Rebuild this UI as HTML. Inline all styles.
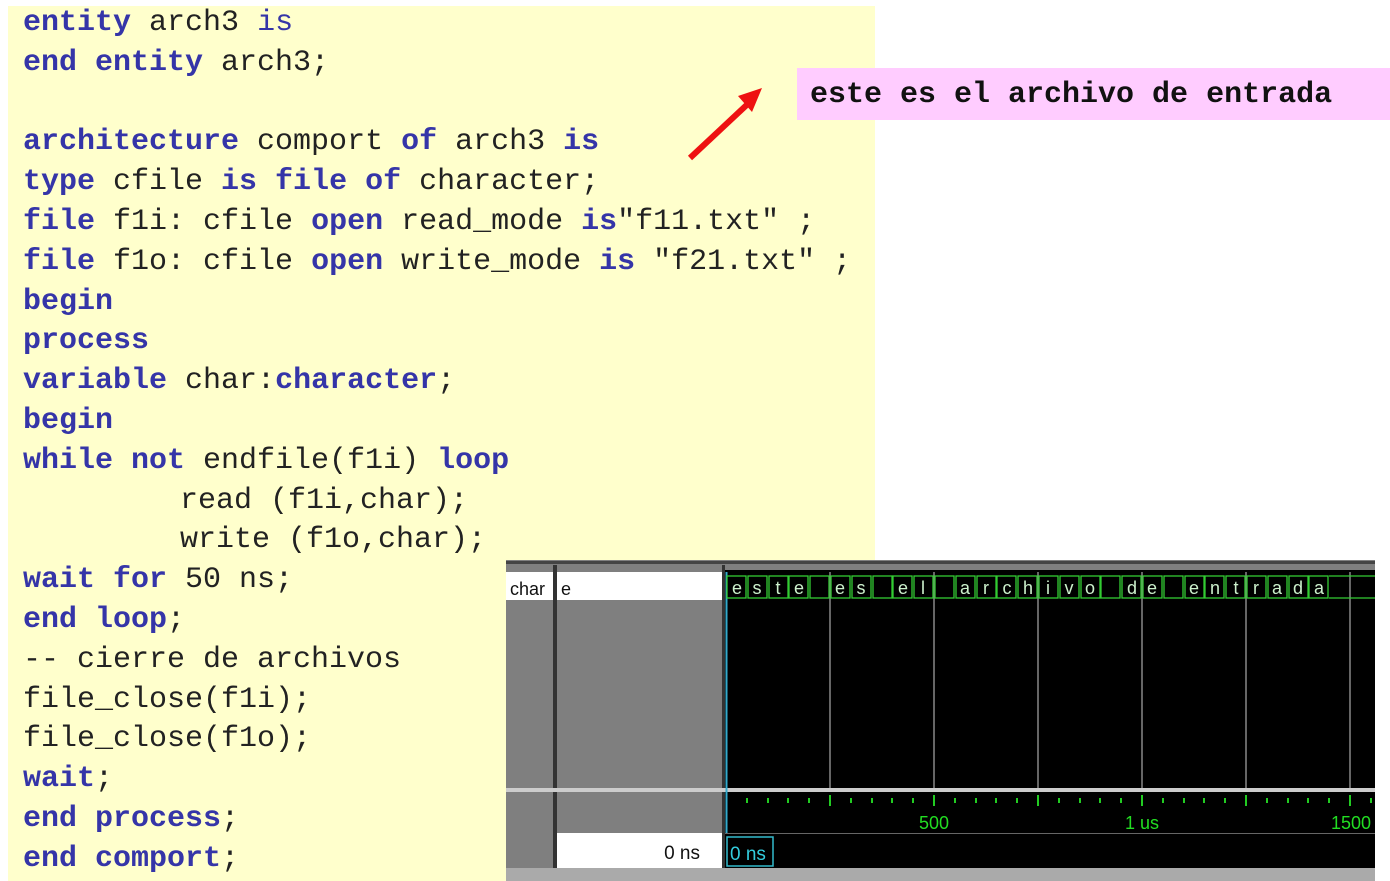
<!DOCTYPE html>
<html><head><meta charset="utf-8"><style>
body{margin:0;width:1390px;height:881px;background:#fff;position:relative;overflow:hidden}
#y{position:absolute;left:8px;top:6px;width:867px;height:875px;background:#ffffcc}
#code{position:absolute;left:23px;top:4px;margin:0;font-family:"Liberation Mono",monospace;font-size:30px;line-height:39.8px;color:#222;white-space:pre}
b{color:#3535a8}
.in{display:inline-block;width:157px}
#pink{position:absolute;left:797px;top:68px;width:593px;height:52px;background:#ffccff;font-family:"Liberation Mono",monospace;font-weight:bold;font-size:30px;line-height:54px;color:#111;padding-left:13px;box-sizing:border-box;white-space:pre}
svg{position:absolute;left:0;top:0}
</style></head><body>
<div id="y"></div>
<pre id="code"><b>entity</b> arch3 <b style="font-weight:normal">is</b>
<b>end entity</b> arch3;

<b>architecture</b> comport <b>of</b> arch3 <b>is</b>
<b>type</b> cfile <b>is file of</b> character;
<b>file</b> f1i: cfile <b>open</b> read_mode <b>is</b>"f11.txt" ;
<b>file</b> f1o: cfile <b>open</b> write_mode <b>is</b> "f21.txt" ;
<b>begin</b>
<b>process</b>
<b>variable</b> char:<b>character</b>;
<b>begin</b>
<b>while not</b> endfile(f1i) <b>loop</b>
<span class="in"></span>read (f1i,char);
<span class="in"></span>write (f1o,char);
<b>wait for</b> 50 ns;
<b>end loop</b>;
-- cierre de archivos
file_close(f1i);
file_close(f1o);
<b>wait</b>;
<b>end process</b>;
<b>end comport</b>;</pre>
<div id="pink">este es el archivo de entrada</div>
<svg width="1390" height="881">
<line x1="690" y1="158" x2="752" y2="100" stroke="#ee1111" stroke-width="6"/>
<polygon points="762,88 738,96 752,112" fill="#ee1111"/>
<rect x="506" y="560" width="869" height="320" fill="#7f7f7f"/>
<rect x="506" y="561" width="869" height="3" fill="#444"/>
<rect x="506" y="572" width="47" height="28" fill="#fff"/>
<rect x="557" y="572" width="165" height="28" fill="#fff"/>
<rect x="553" y="565" width="4" height="316" fill="#333"/>
<rect x="722" y="565" width="3" height="316" fill="#333"/>
<rect x="725" y="570" width="650" height="298" fill="#000"/>
<rect x="506" y="788" width="869" height="4" fill="#ccc"/>
<rect x="557" y="833" width="165" height="35" fill="#fff"/>
<rect x="506" y="868" width="869" height="13" fill="#aaa"/>
<rect x="725" y="833" width="650" height="1" fill="#666"/>
<line x1="726.5" y1="572" x2="726.5" y2="833" stroke="#33aacc" stroke-width="2"/>
<g stroke="#888" stroke-width="1.5">
<line x1="830" y1="572" x2="830" y2="788"/><line x1="934" y1="572" x2="934" y2="788"/><line x1="1038" y1="572" x2="1038" y2="788"/><line x1="1142" y1="572" x2="1142" y2="788"/><line x1="1246" y1="572" x2="1246" y2="788"/><line x1="1350" y1="572" x2="1350" y2="788"/>
</g>
<text x="510" y="595" font-family="Liberation Sans,sans-serif" font-size="18" fill="#111">char</text>
<text x="561" y="595" font-family="Liberation Sans,sans-serif" font-size="18" fill="#111">e</text>
<text x="700" y="859" text-anchor="end" font-family="Liberation Sans,sans-serif" font-size="19" fill="#111">0 ns</text>
<rect x="727" y="837" width="46" height="29" fill="none" stroke="#33bbcc" stroke-width="1.5"/>
<text x="730" y="860" font-family="Liberation Sans,sans-serif" font-size="19" fill="#33ccdd">0 ns</text>
<g font-family="Liberation Sans,sans-serif" font-size="18" fill="#22dd22" text-anchor="middle">
<text x="934" y="829">500</text><text x="1142" y="829">1 us</text><text x="1351" y="829">1500</text>
</g>
<g stroke="#22cc22" stroke-width="2">
<line x1="747" y1="798" x2="747" y2="803"/><line x1="768" y1="798" x2="768" y2="803"/><line x1="788" y1="798" x2="788" y2="803"/><line x1="809" y1="798" x2="809" y2="803"/><line x1="830" y1="795" x2="830" y2="806"/>
<line x1="851" y1="798" x2="851" y2="803"/><line x1="872" y1="798" x2="872" y2="803"/><line x1="892" y1="798" x2="892" y2="803"/><line x1="913" y1="798" x2="913" y2="803"/><line x1="934" y1="795" x2="934" y2="806"/>
<line x1="955" y1="798" x2="955" y2="803"/><line x1="976" y1="798" x2="976" y2="803"/><line x1="996" y1="798" x2="996" y2="803"/><line x1="1017" y1="798" x2="1017" y2="803"/><line x1="1038" y1="795" x2="1038" y2="806"/>
<line x1="1059" y1="798" x2="1059" y2="803"/><line x1="1080" y1="798" x2="1080" y2="803"/><line x1="1100" y1="798" x2="1100" y2="803"/><line x1="1121" y1="798" x2="1121" y2="803"/><line x1="1142" y1="795" x2="1142" y2="806"/>
<line x1="1163" y1="798" x2="1163" y2="803"/><line x1="1184" y1="798" x2="1184" y2="803"/><line x1="1204" y1="798" x2="1204" y2="803"/><line x1="1225" y1="798" x2="1225" y2="803"/><line x1="1246" y1="795" x2="1246" y2="806"/>
<line x1="1267" y1="798" x2="1267" y2="803"/><line x1="1288" y1="798" x2="1288" y2="803"/><line x1="1308" y1="798" x2="1308" y2="803"/><line x1="1329" y1="798" x2="1329" y2="803"/><line x1="1350" y1="795" x2="1350" y2="806"/><line x1="1371" y1="798" x2="1371" y2="803"/>
</g>
<g stroke="#33cc33" stroke-width="1.3" fill="none">
<line x1="1329" y1="576" x2="1375" y2="576"/><line x1="1329" y1="598" x2="1375" y2="598"/>
<rect x="727" y="576" width="19" height="22"/><rect x="748" y="576" width="19" height="22"/><rect x="769" y="576" width="19" height="22"/><rect x="789" y="576" width="19" height="22"/><rect x="810" y="576" width="19" height="22"/><rect x="831" y="576" width="19" height="22"/><rect x="852" y="576" width="19" height="22"/><rect x="873" y="576" width="19" height="22"/><rect x="893" y="576" width="19" height="22"/><rect x="914" y="576" width="19" height="22"/><rect x="935" y="576" width="19" height="22"/><rect x="956" y="576" width="19" height="22"/><rect x="977" y="576" width="19" height="22"/><rect x="997" y="576" width="19" height="22"/><rect x="1018" y="576" width="19" height="22"/><rect x="1039" y="576" width="19" height="22"/><rect x="1060" y="576" width="19" height="22"/><rect x="1081" y="576" width="19" height="22"/><rect x="1101" y="576" width="19" height="22"/><rect x="1122" y="576" width="19" height="22"/><rect x="1143" y="576" width="19" height="22"/><rect x="1164" y="576" width="19" height="22"/><rect x="1185" y="576" width="19" height="22"/><rect x="1205" y="576" width="19" height="22"/><rect x="1226" y="576" width="19" height="22"/><rect x="1247" y="576" width="19" height="22"/><rect x="1268" y="576" width="19" height="22"/><rect x="1289" y="576" width="19" height="22"/><rect x="1309" y="576" width="19" height="22"/>
</g>
<g font-family="Liberation Sans,sans-serif" font-size="18" fill="#ccf0cc" text-anchor="middle">
<text x="737" y="594">e</text><text x="757" y="594">s</text><text x="778" y="594">t</text><text x="799" y="594">e</text>
<text x="840" y="594">e</text><text x="861" y="594">s</text>
<text x="903" y="594">e</text><text x="923" y="594">l</text>
<text x="965" y="594">a</text><text x="986" y="594">r</text><text x="1007" y="594">c</text><text x="1028" y="594">h</text><text x="1048" y="594">i</text><text x="1069" y="594">v</text><text x="1090" y="594">o</text>
<text x="1132" y="594">d</text><text x="1152" y="594">e</text>
<text x="1194" y="594">e</text><text x="1215" y="594">n</text><text x="1236" y="594">t</text><text x="1256" y="594">r</text><text x="1277" y="594">a</text><text x="1298" y="594">d</text><text x="1319" y="594">a</text>
</g>
</svg>
</body></html>
